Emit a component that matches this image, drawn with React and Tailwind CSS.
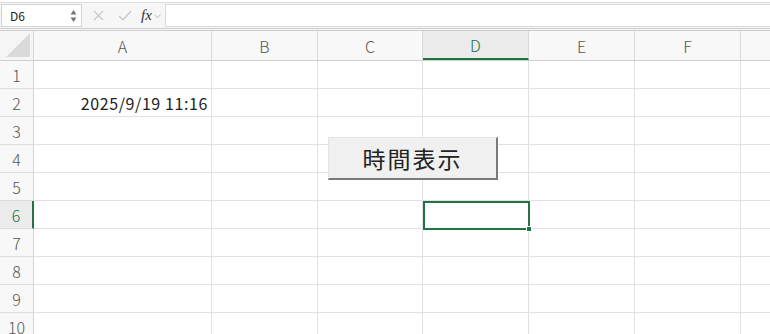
import React from "react";

const cols = [
  { k: "A", w: 178 },
  { k: "B", w: 106 },
  { k: "C", w: 105 },
  { k: "D", w: 106 },
  { k: "E", w: 106 },
  { k: "F", w: 106 },
  { k: "", w: 40 },
];
const rows = [1, 2, 3, 4, 5, 6, 7, 8, 9, 10];
const font = { fontFamily: '"Noto Sans CJK JP", "Noto Sans", sans-serif' };

export default function App() {
  return (
    <div className="w-[770px] h-[334px] overflow-hidden bg-white relative" style={font}>
      {/* formula bar */}
      <div className="h-[26px] bg-[#f6f6f6] border-t border-[#dcdcdc] mt-[2px] flex items-stretch">
        <div className="w-[81px] ml-[1px] my-[1px] bg-white border border-[#d4d4d4] flex items-center justify-between pl-[8px] pr-[4px]">
          <span className="text-[12px] text-[#222]">D6</span>
          <svg width="7" height="14" viewBox="0 0 7 14">
            <path d="M3.5 1 L6.5 5.5 L0.5 5.5 Z" fill="#777" />
            <path d="M3.5 13 L6.5 8.5 L0.5 8.5 Z" fill="#777" />
          </svg>
        </div>
        <div className="flex items-center pl-[11px] gap-[14px]">
          <svg width="11" height="11" viewBox="0 0 11 11"><path d="M1 1 L10 10 M10 1 L1 10" stroke="#c8c8c8" strokeWidth="1.4" /></svg>
          <svg width="14" height="11" viewBox="0 0 14 11"><path d="M1 6 L5 10 L13 1" stroke="#c8c8c8" strokeWidth="1.4" fill="none" /></svg>
        </div>
        <div className="flex items-center pl-[9px]">
          <span className="text-[15px] italic text-[#333]" style={{ fontFamily: '"Liberation Serif", serif' }}>fx</span>
          <svg className="ml-[2px] mt-[2px]" width="7" height="5" viewBox="0 0 7 5"><path d="M0.5 0.5 L3.5 4 L6.5 0.5" stroke="#bbb" strokeWidth="1" fill="none" /></svg>
        </div>
        <div className="flex-1 ml-[4px] my-[1px] bg-white border-l border-y border-[#d8d8d8]"></div>
      </div>
      <div className="h-[3px] border-t border-b border-[#cfcfcf] bg-[#f4f4f4]"></div>

      {/* header row */}
      <div className="flex h-[30px] border-b border-[#cfcfcf]">
        <div className="w-[34px] shrink-0 bg-[#f5f5f5] border-r border-[#d6d6d6] relative">
          <div className="absolute right-[3px] bottom-[3px] w-0 h-0 border-l-[24px] border-l-transparent border-b-[24px] border-b-[#dadada]"></div>
        </div>
        {cols.map((c) => (
          <div
            key={c.k || "g"}
            style={{ width: c.w }}
            className={
              "shrink-0 flex items-center justify-center text-[16px] font-light border-r border-[#dadada] " +
              (c.k === "D"
                ? "bg-[#ebebeb] text-[#217346] border-b-2 border-b-[#217346]"
                : "bg-[#f8f8f8] text-[#555]")
            }
          >
            {c.k}
          </div>
        ))}
      </div>

      {/* rows */}
      {rows.map((r) => (
        <div key={r} className="flex h-[28px]">
          <div
            className={
              "w-[34px] shrink-0 flex items-center justify-center text-[16px] font-light border-b border-[#dcdcdc] " +
              (r === 6
                ? "bg-[#ebebeb] text-[#217346] border-r-2 border-r-[#217346]"
                : "bg-[#f8f8f8] text-[#555] border-r border-r-[#d6d6d6]")
            }
          >
            {r}
          </div>
          {cols.map((c) => (
            <div
              key={c.k || "g"}
              style={{ width: c.w }}
              className="shrink-0 border-r border-b border-[#e1e1e1] flex items-center justify-end pr-[3px] text-[16px] tracking-[0.6px] text-[#222]"
            >
              {r === 2 && c.k === "A" ? "2025/9/19 11:16" : ""}
            </div>
          ))}
        </div>
      ))}

      {/* button */}
      <div className="absolute left-[328px] top-[137px] w-[170px] h-[43px] bg-[#f0f0f0] border-t border-l border-[#e4e4e4] border-r-2 border-b-2 border-r-[#7a7a7a] border-b-[#7a7a7a] flex items-center justify-center">
        <span className="text-[23px] text-[#222] tracking-[2px]">時間表示</span>
      </div>

      {/* selection */}
      <div className="absolute left-[423px] top-[201px] w-[107px] h-[29px] border-2 border-[#217346]"></div>
      <div className="absolute left-[526px] top-[226px] w-[6px] h-[6px] bg-[#217346] border border-white"></div>
    </div>
  );
}
